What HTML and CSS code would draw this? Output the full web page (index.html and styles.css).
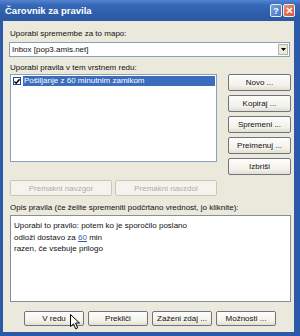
FILE: index.html
```html
<!DOCTYPE html>
<html lang="sl">
<head>
    <meta charset="UTF-8">
    <title>Čarovnik za pravila</title>
    <link rel="stylesheet" href="styles.css">
</head>
<body>
    <div class="window">
        <div class="titlebar">
            <span class="title">Čarovnik za pravila</span>
            <div class="caption-btns">
                <span class="cap help">?</span>
                <span class="cap close">
                    <svg width="7" height="7" viewBox="0 0 7 7"><path d="M1 1 L6 6 M6 1 L1 6" stroke="#fff" stroke-width="1.6"/></svg>
                </span>
            </div>
        </div>

        <div class="client">
            <div class="label">Uporabi spremembe za to mapo:</div>
            <div class="combo">
                <span class="combo-text">Inbox [pop3.amis.net]</span>
                <span class="combo-arrow">
                    <svg width="5" height="3" viewBox="0 0 5 3"><path d="M0 0 H5 L2.5 3 Z" fill="#000"/></svg>
                </span>
            </div>

            <div class="label label-gap">Uporabi pravila v tem vrstnem redu:</div>
            <div class="rules">
                <div class="rules-left">
                    <div class="listbox">
                        <div class="row">
                            <span class="check">
                                <svg width="7" height="7" viewBox="0 0 7 7"><path d="M0.5 3.5 L2.5 5.5 L6.5 1" stroke="#000" stroke-width="1.7" fill="none"/></svg>
                            </span>
                            <span class="row-text">Pošiljanje z 60 minutnim zamikom</span>
                        </div>
                    </div>
                    <div class="move-btns">
                        <button class="btn" disabled>Premakni navzgor</button>
                        <button class="btn" disabled>Premakni navzdol</button>
                    </div>
                </div>
                <div class="side-btns">
                    <button class="btn">Novo ...</button>
                    <button class="btn">Kopiraj ...</button>
                    <button class="btn">Spremeni ...</button>
                    <button class="btn">Preimenuj ...</button>
                    <button class="btn">Izbriši</button>
                </div>
            </div>

            <div class="label desc-label">Opis pravila (če želite spremeniti podčrtano vrednost, jo kliknite):</div>
            <div class="desc">
                <div>Uporabi to pravilo: potem ko je sporočilo poslano</div>
                <div>odloži dostavo za <a href="#" class="value">60</a> min</div>
                <div>razen, če vsebuje prilogo</div>
            </div>

            <div class="footer">
                <button class="btn">V redu</button>
                <button class="btn">Prekliči</button>
                <button class="btn">Zaženi zdaj ...</button>
                <button class="btn">Možnosti ...</button>
            </div>
        </div>

        <svg class="cursor" width="11" height="17" viewBox="0 0 11 17">
            <path d="M0.5 0.5 L0.5 12.5 L3.5 9.8 L5.6 14.8 L7.6 13.9 L5.6 9 L9.5 9 Z" fill="#fff" stroke="#000" stroke-width="1"/>
        </svg>
    </div>
</body>
</html>
```

FILE: styles.css
```css
* {
    margin: 0;
    padding: 0;
    box-sizing: border-box;
}

body {
    font-family: 'Liberation Sans', Arial, sans-serif;
    font-size: 8px;
    color: #111;
    width: 300px;
    height: 336px;
    overflow: hidden;
}

.window {
    position: relative;
    display: flex;
    flex-direction: column;
    width: 300px;
    height: 336px;
    background: #2b5aa8;
    padding: 0 6px 4px 3px;
}

.titlebar {
    height: 21px;
    display: flex;
    align-items: center;
    justify-content: space-between;
    margin: 0 -6px 0 -3px;
    padding: 0 5px 0 5px;
    background: linear-gradient(#5584d0 0%, #3568b8 25%, #2d5da8 70%, #2a58a2 100%);
}

.title {
    color: #fff;
    font-family: 'Liberation Sans', Arial, sans-serif;
    font-weight: bold;
    font-size: 9.5px;
}

.caption-btns {
    display: flex;
    gap: 1px;
}

.cap {
    width: 12px;
    height: 13px;
    border: 1px solid #e8eef8;
    border-radius: 2px;
    display: flex;
    align-items: center;
    justify-content: center;
    color: #fff;
    font-weight: bold;
    font-size: 9px;
}

.help {
    background: linear-gradient(135deg, #7aa2dc, #4671bb);
}

.close {
    background: linear-gradient(135deg, #ec8f70, #d5553a);
}

.client {
    flex: 1;
    background: #ebe8dc;
    padding: 7px 3px 0 7px;
    display: flex;
    flex-direction: column;
}

.label {
    height: 11px;
    line-height: 11px;
    white-space: nowrap;
}

.combo {
    margin: 3px 1px 0 -1px;
    height: 15px;
    background: #fff;
    border: 1px solid #8aa0b8;
    display: flex;
    align-items: center;
    justify-content: space-between;
    padding: 0 1px 0 2px;
}

.combo-arrow {
    width: 10px;
    height: 11px;
    background: #ebe8dc;
    border: 1px solid #b8b5a8;
    display: flex;
    align-items: center;
    justify-content: center;
}

.label-gap {
    margin-top: 5px;
}

.rules {
    margin-top: 1px;
    display: flex;
    justify-content: space-between;
}

.rules-left {
    width: 207px;
}

.listbox {
    height: 88px;
    background: #fff;
    border: 1px solid #8aa0b8;
    padding: 1px;
}

.row {
    display: flex;
    align-items: center;
    height: 10px;
}

.check {
    width: 8px;
    height: 8px;
    margin: 0 2px 0 1px;
    background: #fff;
    border: 1px solid #1c5180;
    display: flex;
    align-items: center;
    justify-content: center;
}

.row-text {
    flex: 1;
    height: 10px;
    line-height: 10px;
    background: #3c6cbc;
    color: #fff;
    padding-left: 1px;
    white-space: nowrap;
}

.move-btns {
    margin-top: 18px;
    display: flex;
    justify-content: space-between;
}

.move-btns .btn {
    width: 102px;
    height: 16px;
}

.btn {
    font-family: 'Liberation Sans', Arial, sans-serif;
    font-size: 8px;
    color: #111;
    height: 17px;
    background: linear-gradient(#fdfdfb, #f2f1ea 70%, #e2ded0);
    border: 1px solid #6f7580;
    border-radius: 2px;
    white-space: nowrap;
}

.btn:disabled {
    color: #b0ada0;
    border-color: #c9c7ba;
    background: #f4f3ee;
}

.side-btns {
    width: 63px;
    display: flex;
    flex-direction: column;
    gap: 4px;
}

.desc-label {
    margin-top: 6px;
}

.desc {
    margin-top: 2px;
    height: 87px;
    background: #fff;
    border: 1px solid #8a8f96;
    padding: 4px 3px;
    line-height: 11.5px;
}

.value {
    color: #2f5da8;
}

.footer {
    margin-top: 9px;
    padding-left: 14px;
    display: flex;
    gap: 4px;
}

.footer .btn {
    width: 60px;
    height: 15px;
}

.cursor {
    position: absolute;
    left: 70px;
    top: 314px;
}
```
